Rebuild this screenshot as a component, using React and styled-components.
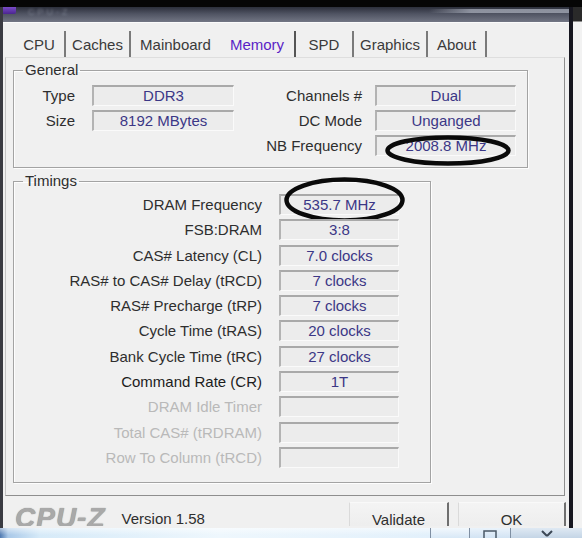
import React from 'react';
import styled, { createGlobalStyle } from 'styled-components';

const Global = createGlobalStyle`
  html, body { margin: 0; padding: 0; background: #000; }
  body { font-family: "Liberation Sans", Arial, sans-serif; }
`;

const Screen = styled.div`
  width: 582px;
  height: 538px;
  overflow: hidden;
  display: flex;
  flex-direction: column;
  background: #000;
  font-family: "Liberation Sans", Arial, sans-serif;
  font-size: 15px;
  color: #2e2e2e;
`;

const TopEdge = styled.div`
  height: 7px;
  flex: none;
  background: #060606;
`;

const Middle = styled.div`
  flex: 1;
  display: flex;
  min-height: 0;
`;

const Window = styled.div`
  width: 573px;
  flex: none;
  box-sizing: border-box;
  display: flex;
  flex-direction: column;
  border-left: 3px solid #3a3b42;
  border-right: 4px solid #16161f;
`;

const Outside = styled.div`
  flex: 1;
  background: linear-gradient(#2a2a2a 0, #2a2a2a 14px, #f2f2f2 15px);
`;

const TitleBar = styled.div`
  height: 15px;
  flex: none;
  display: flex;
  align-items: flex-start;
  gap: 12px;
  background: linear-gradient(#2c2f3b 0%, #4f5362 45%, #727684 100%);
  overflow: hidden;
`;

const TitleGlow = styled.div`
  margin-left: auto;
  margin-top: 2px;
  width: 140px;
  height: 4px;
  background: linear-gradient(90deg, rgba(150,155,170,0), rgba(160,165,178,0.8) 30%, rgba(160,165,178,0.8));
`;

const AppIcon = styled.div`
  width: 16px;
  height: 7px;
  margin-left: -3px;
  background: linear-gradient(#7a4cc8, #4b2590);
  border-radius: 0 0 2px 0;
`;

const TitleText = styled.span`
  font-size: 9px;
  line-height: 10px;
  color: rgba(190, 195, 210, 0.35);
  letter-spacing: 3px;
  filter: blur(0.8px);
`;

const Client = styled.div`
  flex: 1;
  display: flex;
  flex-direction: column;
  background: #f0f0f0;
  border-top: 1px solid #fbfbfb;
  padding-top: 8px;
`;

const Tabs = styled.div`
  display: flex;
  height: 26px;
  padding-left: 11px;
`;

const Tab = styled.div`
  width: ${p => p.$w}px;
  box-sizing: border-box;
  text-align: center;
  line-height: 27px;
  font-size: 15px;
  color: ${p => (p.$active ? '#5a1fc6' : '#3a3a3a')};
  border-right: ${p => (p.$noSep ? 'none' : `2px solid ${p.$dark ? '#555' : '#7a7a7a'}`)};
`;

const Panel = styled.div`
  margin-left: 2px;
  width: 560px;
  box-sizing: border-box;
  border: 1px solid #8e8e8e;
  border-top-color: #dedede;
  border-left-color: #c4c4c4;
  padding: 4px 0 12px 7px;
  display: flex;
  flex-direction: column;
  gap: 5px;
`;

const Group = styled.fieldset`
  margin: 0;
  min-width: 0;
  width: ${p => p.$w}px;
  box-sizing: border-box;
  padding: ${p => p.$pad};
  border: 1px solid #a3a3a3;
  box-shadow: inset 1px 1px 0 #fdfdfd, 1px 1px 0 #fdfdfd;
`;

const Legend = styled.legend`
  margin-left: 9px;
  padding: 0 2px;
  font-size: 15px;
  line-height: 16px;
  color: #2e2e2e;
`;

const GeneralGrid = styled.div`
  display: grid;
  grid-template-columns: 78px 142px 141px 141px;
  grid-auto-rows: 25px;
`;

const TimingGrid = styled.div`
  display: grid;
  grid-template-columns: 265px 120px;
  grid-auto-rows: 25.3px;
`;

const Label = styled.div`
  text-align: right;
  padding-right: ${p => p.$pr}px;
  line-height: 25px;
  white-space: nowrap;
  color: ${p => (p.$off ? '#b9b9b9' : p.$strong ? '#1c1c1c' : '#2e2e2e')};
`;

const Field = styled.div`
  position: relative;
  margin: 2px 0;
  height: 21px;
  box-sizing: border-box;
  background: #ececec;
  border-top: 2px solid #a9a9a9;
  border-left: 2px solid #b3b3b3;
  border-right: 1px solid #fafafa;
  border-bottom: 1px solid #fafafa;
  text-align: center;
  line-height: 18px;
  color: #3b3786;
  white-space: nowrap;
`;

const Spacer = styled.div``;

const Ring = styled.svg`
  position: absolute;
  left: ${p => p.$x}px;
  top: ${p => p.$y}px;
  overflow: visible;
  pointer-events: none;
`;

const Footer = styled.div`
  height: 30px;
  flex: none;
  overflow: hidden;
  display: flex;
  align-items: flex-start;
`;

const Logo = styled.div`
  margin: 8px 0 0 12px;
  font-size: 28px;
  line-height: 28px;
  font-weight: 700;
  font-style: italic;
  letter-spacing: 1px;
  color: #a9a9a9;
  text-shadow: 0 0 1px #7d7d7d;
`;

const Version = styled.div`
  margin: 14px 0 0 16px;
  line-height: 18px;
  color: #2e2e2e;
`;

const Buttons = styled.div`
  margin-left: auto;
  margin-right: 3px;
  display: flex;
  gap: 9px;
`;

const Button = styled.div`
  width: ${p => p.$w}px;
  height: 30px;
  margin-top: 6px;
  box-sizing: border-box;
  padding-top: 8px;
  text-align: center;
  line-height: 18px;
  color: #2e2e2e;
  background: linear-gradient(#f4f4f4, #ececec);
  border-top: 1px solid #f9f9f9;
  border-left: 1px solid #dadada;
  border-right: 2px solid #6f6f6f;
`;

const Taskbar = styled.div`
  height: 10px;
  flex: none;
  display: flex;
`;

const TaskMain = styled.div`
  width: 430px;
  background:
    linear-gradient(rgba(255,255,255,0.55), rgba(255,255,255,0) 70%),
    linear-gradient(90deg, #4f79b0 0, #a9c8e8 8px, #d6eaf8 40px, #eef7fd 220px, #e2f0fb 430px);
`;

const TaskCell = styled.div`
  width: ${p => p.$w}px;
  flex: ${p => (p.$grow ? 1 : 'none')};
  display: flex;
  justify-content: center;
  border-left: 1px solid #7f8fa2;
  background: ${p => p.$bg};
`;

const timings = [
  ['DRAM Frequency', '535.7 MHz', 'ring'],
  ['FSB:DRAM', '3:8'],
  ['CAS# Latency (CL)', '7.0 clocks'],
  ['RAS# to CAS# Delay (tRCD)', '7 clocks'],
  ['RAS# Precharge (tRP)', '7 clocks'],
  ['Cycle Time (tRAS)', '20 clocks'],
  ['Bank Cycle Time (tRC)', '27 clocks'],
  ['Command Rate (CR)', '1T', 'strong'],
  ['DRAM Idle Timer', '', 'off'],
  ['Total CAS# (tRDRAM)', '', 'off'],
  ['Row To Column (tRCD)', '', 'off'],
];

const tabs = [
  { t: 'CPU', w: 52 },
  { t: 'Caches', w: 65 },
  { t: 'Mainboard', w: 89, noSep: true },
  { t: 'Memory', w: 76, active: true, dark: true },
  { t: 'SPD', w: 58 },
  { t: 'Graphics', w: 74 },
  { t: 'About', w: 59 },
];

function Oval({ w, h, x, y }) {
  return (
    <Ring $x={x} $y={y} width={w} height={h} viewBox={`0 0 ${w} ${h}`}>
      <ellipse cx={w / 2} cy={h / 2} rx={w / 2 - 2.5} ry={h / 2 - 2.5} fill="none" stroke="#0a0a0a" strokeWidth="4.5" />
    </Ring>
  );
}

export default function App() {
  return (
    <>
      <Global />
      <Screen>
        <TopEdge />
        <Middle>
          <Window>
            <TitleBar>
              <AppIcon />
              <TitleText>CPU-Z</TitleText>
              <TitleGlow />
            </TitleBar>
            <Client>
              <Tabs>
                {tabs.map(t => (
                  <Tab key={t.t} $w={t.w} $active={t.active} $noSep={t.noSep} $dark={t.dark}>
                    {t.t}
                  </Tab>
                ))}
              </Tabs>
              <Panel>
                <Group $w={515} $pad="5px 0 9px 0">
                  <Legend>General</Legend>
                  <GeneralGrid>
                    <Label $pr={17}>Type</Label>
                    <Field>DDR3</Field>
                    <Label $pr={13}>Channels #</Label>
                    <Field>Dual</Field>
                    <Label $pr={17}>Size</Label>
                    <Field>8192 MBytes</Field>
                    <Label $pr={13}>DC Mode</Label>
                    <Field>Unganged</Field>
                    <Spacer />
                    <Spacer />
                    <Label $pr={13}>NB Frequency</Label>
                    <Field>
                      2008.8 MHz
                      <Oval w={126} h={31} x={8} y={-2} />
                    </Field>
                  </GeneralGrid>
                </Group>
                <Group $w={418} $pad="3px 0 12px 0">
                  <Legend>Timings</Legend>
                  <TimingGrid>
                    {timings.map(([label, value, kind]) => (
                      <React.Fragment key={label}>
                        <Label $pr={17} $off={kind === 'off'} $strong={kind === 'strong'}>
                          {label}
                        </Label>
                        <Field>
                          {value}
                          {kind === 'ring' && <Oval w={121} h={46} x={3} y={-19} />}
                        </Field>
                      </React.Fragment>
                    ))}
                  </TimingGrid>
                </Group>
              </Panel>
              <Footer>
                <Logo>CPU-Z</Logo>
                <Version>Version 1.58</Version>
                <Buttons>
                  <Button $w={100}>Validate</Button>
                  <Button $w={108}>OK</Button>
                </Buttons>
              </Footer>
            </Client>
          </Window>
          <Outside />
        </Middle>
        <Taskbar>
          <TaskMain />
          <TaskCell $w={38} $bg="linear-gradient(#f2f8fd, #d8e8f6)" />
          <TaskCell $w={40} $bg="linear-gradient(#eaf3fb, #d2e3f3)">
            <svg width="16" height="10" viewBox="0 0 16 10">
              <rect x="2" y="3" width="12" height="9" fill="none" stroke="#4a5866" strokeWidth="1.5" />
            </svg>
          </TaskCell>
          <TaskCell $grow $bg="linear-gradient(#dfe9f3, #c4d5e6)">
            <svg width="20" height="10" viewBox="0 0 20 10">
              <path d="M5 3 L10 8 M15 3 L10 8" stroke="#3c4856" strokeWidth="2" fill="none" />
            </svg>
          </TaskCell>
        </Taskbar>
      </Screen>
    </>
  );
}
